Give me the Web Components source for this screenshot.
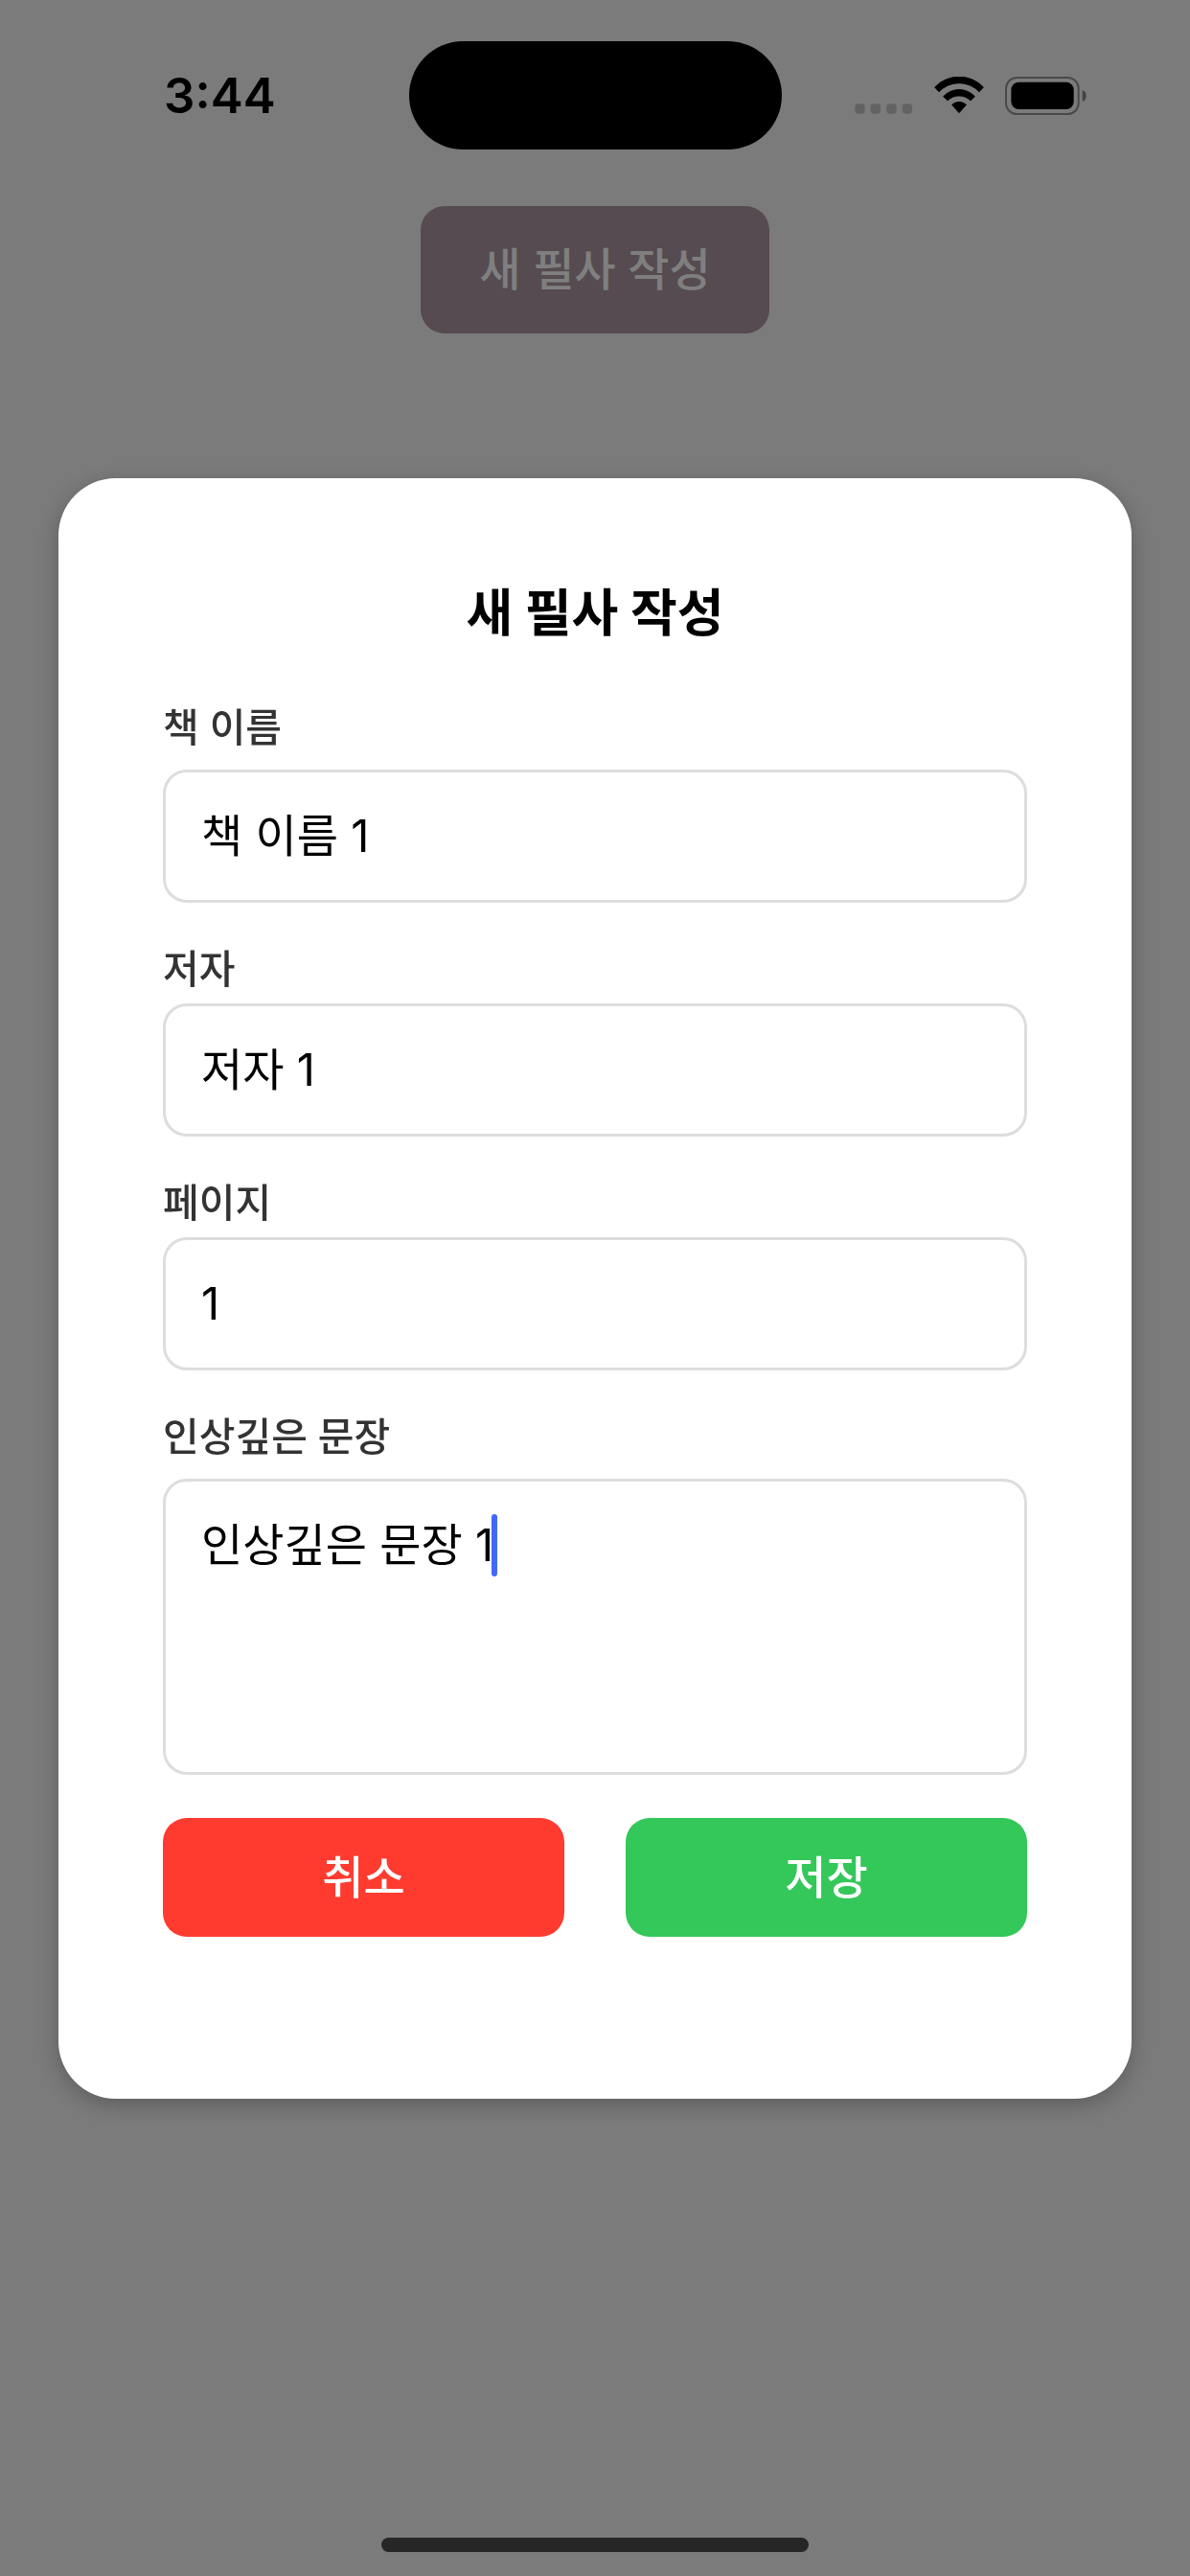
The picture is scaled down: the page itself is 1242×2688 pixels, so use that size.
<!DOCTYPE html>
<html lang="ko">
<head>
<meta charset="utf-8">
<meta name="viewport" content="width=device-width, initial-scale=1">
<title>새 필사 작성</title>
<style>
  html, body { margin: 0; height: 100%; }
  body {
    background: #f6f6f6;
    color: #000;
    font-family: Inter, "Noto Sans CJK KR", sans-serif;
    font-size: 47px;
    line-height: 60px;
  }
</style>
</head>
<body>
<note-app></note-app>

<template id="tpl-app">
  <style>
    :host { display: flex; flex-direction: column; min-height: 100vh; }
    main { flex: 1; display: flex; justify-content: center; align-items: flex-start; padding-top: 59px; }
    .open {
      border: 0; border-radius: 25px; padding: 36px 61px 37px;
      background: #aa96a0; color: #fff; font: inherit; font-weight: 500;
    }
  </style>
  <status-bar time="3:44"></status-bar>
  <main><button class="open" type="button">새 필사 작성</button></main>
  <home-indicator></home-indicator>
  <modal-sheet heading="새 필사 작성">
    <text-field label="책 이름" value="책 이름 1" roomy></text-field>
    <text-field label="저자" value="저자 1"></text-field>
    <text-field label="페이지" value="1"></text-field>
    <text-field label="인상깊은 문장" value="인상깊은 문장 1" roomy multiline></text-field>
    <action-button slot="actions" tone="cancel">취소</action-button>
    <action-button slot="actions" tone="save">저장</action-button>
  </modal-sheet>
</template>

<template id="tpl-status">
  <style>
    :host { display: grid; grid-template-columns: 1fr auto 1fr; align-items: center; padding-top: 43px; }
    .time { padding-left: 171px; font-size: 51px; font-weight: 600; }
    .island { width: 389px; height: 113px; border-radius: 57px; background: #000; }
    .icons { display: flex; align-items: center; gap: 22px; padding-left: 76px; height: 40px; }
    svg { display: block; flex: none; }
    .dots { align-self: flex-end; }
  </style>
  <span class="time"></span>
  <span class="island"></span>
  <span class="icons">
    <svg class="dots" width="61" height="12" viewBox="0 0 183 36" fill="#000" fill-opacity=".2" aria-hidden="true">
      <rect x="1" y="1" width="31" height="31" rx="10"/><rect x="50" y="1" width="31" height="31" rx="10"/><rect x="100" y="1" width="31" height="31" rx="10"/><rect x="149" y="1" width="31" height="31" rx="10"/>
    </svg>
    <svg width="52" height="39" viewBox="0 0 156 117" stroke="#000" stroke-width="3" stroke-linejoin="round" aria-hidden="true">
      <path d="M2 33A105 105 0 0 1 154 33L141 47A87 87 0 0 0 15 47Z"/>
      <path d="M29 62A67 67 0 0 1 127 62L114 75A50 50 0 0 0 42 75Z"/>
      <path d="M56 88A32 32 0 0 1 100 88L78 113Z"/>
    </svg>
    <svg width="85" height="40" viewBox="0 0 255 120" aria-hidden="true">
      <rect x="3" y="3" width="227" height="114" rx="34" fill="none" stroke="#000" stroke-opacity=".4" stroke-width="6"/>
      <rect x="19" y="17" width="196" height="85" rx="24"/>
      <path d="M242 42Q254 47 254 60Q254 73 242 78Z" fill-opacity=".45"/>
    </svg>
  </span>
</template>

<template id="tpl-home">
  <style>
    :host { display: flex; justify-content: center; padding-bottom: 25px; }
    span { width: 446px; height: 15px; border-radius: 8px; background: #4c4c4c; }
  </style>
  <span></span>
</template>

<template id="tpl-modal">
  <style>
    :host {
      position: fixed; inset: 0; box-sizing: border-box; padding: 0 61px;
      display: flex; flex-direction: column; justify-content: center;
      background: rgba(0, 0, 0, .5);
    }
    section {
      padding: 111px 109px 169px; border-radius: 60px; background: #fff;
      box-shadow: 0 6px 25px rgba(0, 0, 0, .25);
    }
    h2 { margin: 0 0 65px; font-size: 53px; line-height: 60px; font-weight: 700; text-align: center; }
    form { display: flex; flex-direction: column; gap: 45px; }
    .actions { display: flex; gap: 64px; }
  </style>
  <section role="dialog" aria-modal="true" aria-labelledby="heading">
    <h2 id="heading"></h2>
    <form>
      <slot></slot>
      <div class="actions"><slot name="actions"></slot></div>
    </form>
  </section>
</template>

<template id="tpl-field">
  <style>
    :host { display: flex; flex-direction: column; gap: 12px; }
    :host([roomy]) { gap: 20px; }
    label { font-size: 41px; line-height: 48px; font-weight: 500; color: #333; }
    .box { position: relative; display: flex; }
    input, textarea {
      flex: 1; min-width: 0; box-sizing: border-box; margin: 0;
      border: 3px solid #ddd; border-radius: 25px; outline: 0; background: #fff;
      color: #000; font: inherit; resize: none;
    }
    input { padding: 36px 37px 37px; }
    textarea { height: 309px; padding: 36px 37px; }
    .caret {
      position: absolute; top: 37px; left: calc(38px + var(--text-width, 0px));
      width: 6px; height: 65px; border-radius: 3px; background: #4169f5;
    }
  </style>
  <label for="control"></label>
  <div class="box"></div>
</template>

<template id="tpl-action">
  <style>
    :host { flex: 1; display: flex; }
    button {
      flex: 1; padding: 32px; border: 0; border-radius: 25px;
      background: #34c759; color: #fff; font: inherit; font-weight: 500;
    }
    :host([tone="cancel"]) button { background: #ff3b30; }
  </style>
  <button type="button"><slot></slot></button>
</template>

<script>
  class TemplateElement extends HTMLElement {
    constructor() {
      super();
      const tpl = document.getElementById(this.constructor.template);
      this.attachShadow({ mode: "open" }).append(document.importNode(tpl.content, true));
    }
    $(selector) { return this.shadowRoot.querySelector(selector); }
  }

  class StatusBar extends TemplateElement {
    static template = "tpl-status";
    connectedCallback() { this.$(".time").textContent = this.getAttribute("time"); }
  }

  class HomeIndicator extends TemplateElement {
    static template = "tpl-home";
  }

  class TextField extends TemplateElement {
    static template = "tpl-field";
    connectedCallback() {
      if (this.control) return;
      const multiline = this.hasAttribute("multiline");
      this.control = document.createElement(multiline ? "textarea" : "input");
      this.control.id = "control";
      this.control.spellcheck = false;
      this.control.value = this.getAttribute("value");
      this.$("label").textContent = this.getAttribute("label");
      this.$(".box").append(this.control);
      if (multiline) {
        this.control.style.caretColor = "transparent";
        const caret = document.createElement("span");
        caret.className = "caret";
        this.$(".box").append(caret);
        this.control.addEventListener("input", () => this.moveCaret());
        this.moveCaret();
      }
    }
    // Puts the wide caret after the text's last letter.
    moveCaret() {
      const style = getComputedStyle(this.control);
      const ctx = document.createElement("canvas").getContext("2d");
      ctx.font = `${style.fontWeight} ${style.fontSize} ${style.fontFamily}`;
      const width = Math.round(ctx.measureText(this.control.value).width);
      this.style.setProperty("--text-width", width + "px");
    }
  }

  class ActionButton extends TemplateElement {
    static template = "tpl-action";
  }

  class ModalSheet extends TemplateElement {
    static template = "tpl-modal";
    connectedCallback() { this.$("h2").textContent = this.getAttribute("heading"); }
  }

  class NoteApp extends TemplateElement {
    static template = "tpl-app";
  }

  customElements.define("status-bar", StatusBar);
  customElements.define("home-indicator", HomeIndicator);
  customElements.define("text-field", TextField);
  customElements.define("action-button", ActionButton);
  customElements.define("modal-sheet", ModalSheet);
  customElements.define("note-app", NoteApp);
</script>
</body>
</html>
